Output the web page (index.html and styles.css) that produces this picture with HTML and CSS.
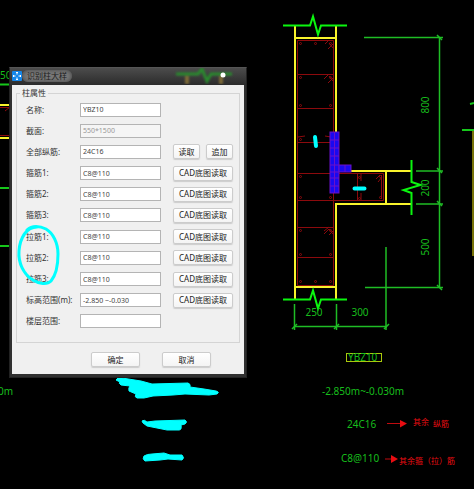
FILE: index.html
```
<!DOCTYPE html>
<html lang="zh-CN">
<head>
<meta charset="utf-8">
<meta name="viewport" content="width=device-width, initial-scale=1">
<title>识别柱大样</title>
<link rel="stylesheet" href="styles.css">
</head>
<body>
<main class="workspace">
  <svg class="drawing" viewBox="0 0 474 489" role="img" aria-label="YBZ10">
    <!-- neighbouring detail, left edge -->
    <g class="green">
      <path d="M0 84.500H11M0 188H11M0 246H11"/>
    </g>
    <path class="yellow" d="M0 105H11M0 138H11"/>
    <path class="red" d="M0 107.500H11M5 111l5-4M0 135.500H11"/>
    <g class="label">
      <text x="0" y="79">50</text>
      <text x="-2" y="395">0m</text>
    </g>
    <!-- neighbouring detail, right edge -->
    <path class="green" d="M462 130H474M470 104l4-1"/>
    <path class="olive" d="M473 131V256"/>

    <!-- reinforcement -->
    <g class="red">
      <path d="M297.500 40.500H333.500V285.500H297.500ZM297 74.500H334M297 108.500H334M297 142.500H334M297 173.500H383.500V200.500H297M297 227.500H334M297 257.500H334M357.500 174V200M361 174v7M361 193v7M381.500 175V199"/>
      <path d="M325 44l4-4M328 49l5-5M329 43l4 5M324 79l4-4M328 83l5-5M329 76l4 5M298 137l7-1M325 136l6 1M324 231l5-4M329 235l5-5M329 229l4 5M324 234l5-5M376 179l4-4M378 182l4-5"/>
      <g>
        <circle cx="300.500" cy="43.500" r="1"/><circle cx="315.500" cy="43.500" r="1"/><circle cx="330.500" cy="43.500" r="1"/>
        <circle cx="300.500" cy="77.500" r="1"/><circle cx="330.500" cy="77.500" r="1"/>
        <circle cx="300.500" cy="105.500" r="1"/><circle cx="330.500" cy="105.500" r="1"/>
        <circle cx="300.500" cy="139.500" r="1"/>
        <circle cx="300.500" cy="176.500" r="1"/><circle cx="359.500" cy="177.500" r="1"/><circle cx="380.500" cy="176.500" r="1"/>
        <circle cx="300.500" cy="197.500" r="1"/><circle cx="330.500" cy="197.500" r="1"/><circle cx="359.500" cy="198.500" r="1"/><circle cx="380.500" cy="197.500" r="1"/>
        <circle cx="300.500" cy="230.500" r="1"/><circle cx="330.500" cy="230.500" r="1"/>
        <circle cx="300.500" cy="254.500" r="1"/><circle cx="330.500" cy="254.500" r="1"/>
        <circle cx="300.500" cy="281.500" r="1"/><circle cx="315.500" cy="281.500" r="1"/><circle cx="330.500" cy="281.500" r="1"/>
      </g>
    </g>

    <!-- column outline -->
    <path class="yellow" d="M295 25V299M336 25V171H411M336 299V204H411M295 38H336M295 287H336M386 171V204"/>

    <!-- break marks -->
    <g class="cut">
      <path d="M283 25.500H310l3-9 5 18 3-9H347"/>
      <path d="M283 299.500H310l3-9 5 18 3-9H347"/>
      <path d="M411.500 160V182l9 3-17 5 8 3V215"/>
    </g>

    <!-- dimensions -->
    <g class="green thin">
      <path d="M364 37.500H443M439.500 37V288M416 171H443M416 204H443M365 287.500H443"/>
      <path d="M294.500 304V330M336.500 304V330M386 247V330M294 326.500H387"/>
      <path d="M437 35l5 5M437 168l5 5M437 201l5 5M437 285l5 5M292 329l5-5M334 329l5-5M384 329l5-5"/>
    </g>
    <g class="label" text-anchor="middle">
      <text x="314" y="316">250</text>
      <text x="360" y="316">300</text>
      <text transform="translate(429 105) rotate(-90)">800</text>
      <text transform="translate(429 188) rotate(-90)">200</text>
      <text transform="translate(429 247) rotate(-90)">500</text>
    </g>

    <!-- picked bars -->
    <g class="picked">
      <rect x="330" y="132" width="9" height="61"/>
      <rect x="339" y="165" width="12" height="7"/>
      <path d="M330 140H339M330 148H339M330 156H339M330 165H339M330 172H339M330 178H339M330 186H339M334.500 132V193M345 165V172"/>
    </g>

    <!-- detail notes -->
    <rect class="tag" x="346.500" y="353.500" width="35" height="8"/>
    <g class="label">
      <text x="348" y="361">YBZ10</text>
      <text x="322" y="395">-2.850m~-0.030m</text>
      <text x="347" y="428">24C16</text>
      <text x="341" y="462">C8@110</text>
    </g>
    <g class="note">
      <path class="shaft" d="M387 423.500H402M385 459H393"/>
      <path d="M400 420l7 3.500-7 4zM391 455l7 4-7 4z"/>
      <text x="413" y="425">其余</text>
      <text x="433" y="427">纵筋</text>
      <text x="399" y="464">其余箍（拉）筋</text>
    </g>

    <!-- pen strokes -->
    <g class="pen">
      <path d="M315 137l1 9M354.500 188.500H364.500"/>
    </g>
    <g class="blot">
      <path d="M116 380q1-3 6-2l19 3 11 3 36-1q3 1 2 4l14 2 12 2q4 1 1 3l-8 1-24-1-12 1-20 1-9 2-7 0q-3-1-1-4l-7-3q-1-3 1-5l-9-1q-3-2-1-3z"/>
      <path d="M142 421q2-2 5 1l8-1 30-1q3 2 0 4l-4 1q1 5-2 5l-12 0-20-4-4-3z"/>
      <path d="M144 456q3-2 8-2l12-1 6 2 12 0q3 3 0 5l-14-1-8 1-15 1q-3-2-1-5z"/>
    </g>
  </svg>

  <form class="dialog" aria-labelledby="dialog-title">
    <header class="titlebar">
      <svg class="app-icon" viewBox="0 0 10 10" aria-hidden="true">
        <rect width="10" height="10" rx="1"/>
        <path d="M5 1v2.500M5 6.500V9M1 5h2.500M6.500 5H9M4 2l1-1 1 1M4 8l1 1 1-1M2 4L1 5l1 1M8 4l1 1-1 1"/>
      </svg>
      <h1 id="dialog-title" class="title">识别柱大样</h1>
      <svg class="glass" viewBox="0 0 66 16" aria-hidden="true">
        <path class="glow-post" d="M15 7V16M49 7V16"/>
        <path class="glow-cut" d="M4 6H26l4-5 5 12 4-7H60"/>
        <circle cx="51" cy="7" r="2.500"/>
      </svg>
    </header>
    <div class="body">
      <fieldset class="group">
        <legend>柱属性</legend>
        <div class="rows">
          <div class="row"><label for="f1">名称:</label><input id="f1" value="YBZ10"></div>
          <div class="row"><label for="f2">截面:</label><input id="f2" value="550*1500" disabled></div>
          <div class="row"><label for="f3">全部纵筋:</label><input id="f3" value="24C16"><div class="actions"><button type="button">读取</button><button type="button">追加</button></div></div>
          <div class="row"><label for="f4">箍筋1:</label><input id="f4" value="C8@110"><div class="actions"><button type="button">CAD底图读取</button></div></div>
          <div class="row"><label for="f5">箍筋2:</label><input id="f5" value="C8@110"><div class="actions"><button type="button">CAD底图读取</button></div></div>
          <div class="row"><label for="f6">箍筋3:</label><input id="f6" value="C8@110"><div class="actions"><button type="button">CAD底图读取</button></div></div>
          <div class="row"><label for="f7">拉筋1:</label><input id="f7" value="C8@110"><div class="actions"><button type="button">CAD底图读取</button></div></div>
          <div class="row"><label for="f8">拉筋2:</label><input id="f8" value="C8@110"><div class="actions"><button type="button">CAD底图读取</button></div></div>
          <div class="row"><label for="f9">拉筋3:</label><input id="f9" value="C8@110"><div class="actions"><button type="button">CAD底图读取</button></div></div>
          <div class="row"><label for="f10">标高范围(m):</label><input id="f10" value="-2.850 ~-0.030"><div class="actions"><button type="button">CAD底图读取</button></div></div>
          <div class="row"><label for="f11">楼层范围:</label><input id="f11" value=""></div>
        </div>
      </fieldset>
      <footer class="footer">
        <button type="submit">确定</button>
        <button type="button">取消</button>
      </footer>
    </div>
    <svg class="ring" viewBox="0 0 48 64" aria-hidden="true">
      <path d="M22 3C12 3 5 13 4 27c-1 12 5 24 14 29 6 4 14 5 18 1 5-6 7-16 7-27C43 19 38 9 31 5 25 2 17 1 12 6"/>
    </svg>
  </form>
</main>
</body>
</html>
```
FILE: styles.css
```
* {
  box-sizing: border-box;
}

body {
  margin: 0;
  background: #000;
  font-family: "Noto Sans", "Noto Sans CJK SC", sans-serif;
  font-size: 8px;
  line-height: 12px;
}

.workspace {
  position: relative;
  overflow: hidden;
}

.drawing {
  display: block;
  width: 100%;
  fill: none;
}

.green { stroke: #16c71b; stroke-width: 2; }
.thin { stroke: #1fbd25; stroke-width: 1.5; }
.cut { stroke: #0bf50f; stroke-width: 2; }
.yellow { stroke: #f8f32b; stroke-width: 2; }
.olive { stroke: #777208; stroke-width: 2; }
.red { stroke: #8c0a0d; stroke-width: 1; }
.tag { stroke: #a9c80c; stroke-width: 1; }

.label {
  fill: #17bd1c;
  font-size: 10px;
}

.picked {
  fill: #1a08f0;
  stroke: #6a10c8;
  stroke-width: 1;
}

.note {
  fill: #e80d12;
  font-size: 8px;
}

.shaft { stroke: #c00b0f; stroke-width: 1; }

.pen {
  stroke: #0ff;
  stroke-width: 4;
  stroke-linecap: round;
}

.blot {
  fill: #0ff;
  stroke: #0ff;
  stroke-linejoin: round;
}

.dialog {
  position: absolute;
  top: 67px;
  left: 9px;
  width: 238px;
  padding: 0 2px 3px;
  background: #303030;
  border: 1px solid #222;
  border-top-color: #555;
}

.titlebar {
  display: flex;
  align-items: center;
  height: 17px;
  margin: 0 -2px;
  padding-left: 2px;
  padding-bottom: 2px;
  background: linear-gradient(#4c4c4c, #2b2b2b);
}

.app-icon {
  width: 10px;
  height: 10px;
  fill: #1686e8;
}

.app-icon path {
  fill: none;
  stroke: #fff;
}

.title {
  margin: 0;
  padding: 0 5px;
  border-radius: 6px;
  background: #777;
  box-shadow: inset 0 0 4px #444;
  color: #1c1c1c;
  font-size: 8px;
  font-weight: 400;
}

.glass {
  width: 66px;
  height: 16px;
  margin-left: auto;
  margin-right: 8px;
  fill: none;
}

.glow-post { stroke: #7c6a38; stroke-width: 4; filter: blur(1px); }
.glow-cut { stroke: #2a8a2e; stroke-width: 3; filter: blur(1px); }
.glass circle { fill: #fff; }

.body {
  padding: 2px 4px 7px;
  background: #f0f0f0;
  color: #333;
}

.group {
  min-width: 0;
  height: 256px;
  margin: 0;
  padding: 0 6px 11px 9px;
  border: 1px solid #d4d4d4;
}

.group legend {
  margin-left: -6px;
  padding: 0 2px;
}

.rows {
  display: grid;
  grid-template-rows: repeat(11, 1fr);
  height: 233px;
}

.row {
  display: grid;
  grid-template-columns: 54px 81px 72px;
  align-items: center;
}

.row label {
  white-space: nowrap;
}

.row input {
  width: 100%;
  height: 14px;
  padding: 0 2px;
  border: 1px solid #b4b4b4;
  background: #fff;
  color: #444;
  font: inherit;
  font-size: 7px;
}

.row input:disabled {
  background: #f5f5f5;
  color: #999;
}

.actions {
  display: flex;
  gap: 6px;
  margin-left: 12px;
}

button {
  flex: 1;
  height: 15px;
  padding: 0;
  border: 1px solid #ccc;
  border-radius: 2px;
  background: linear-gradient(#fff, #f4f4f4);
  box-shadow: 0 1px 1px #ccc;
  color: #222;
  font: inherit;
  line-height: 12px;
  white-space: nowrap;
}

.footer {
  display: flex;
  justify-content: flex-end;
  gap: 22px;
  padding: 9px 29px 0 0;
}

.footer button {
  flex: 0 0 49px;
}

.ring {
  position: absolute;
  top: 156px;
  left: 5px;
  width: 48px;
  height: 64px;
  fill: none;
  stroke: #0ff;
  stroke-width: 3;
  stroke-linecap: round;
}
```
